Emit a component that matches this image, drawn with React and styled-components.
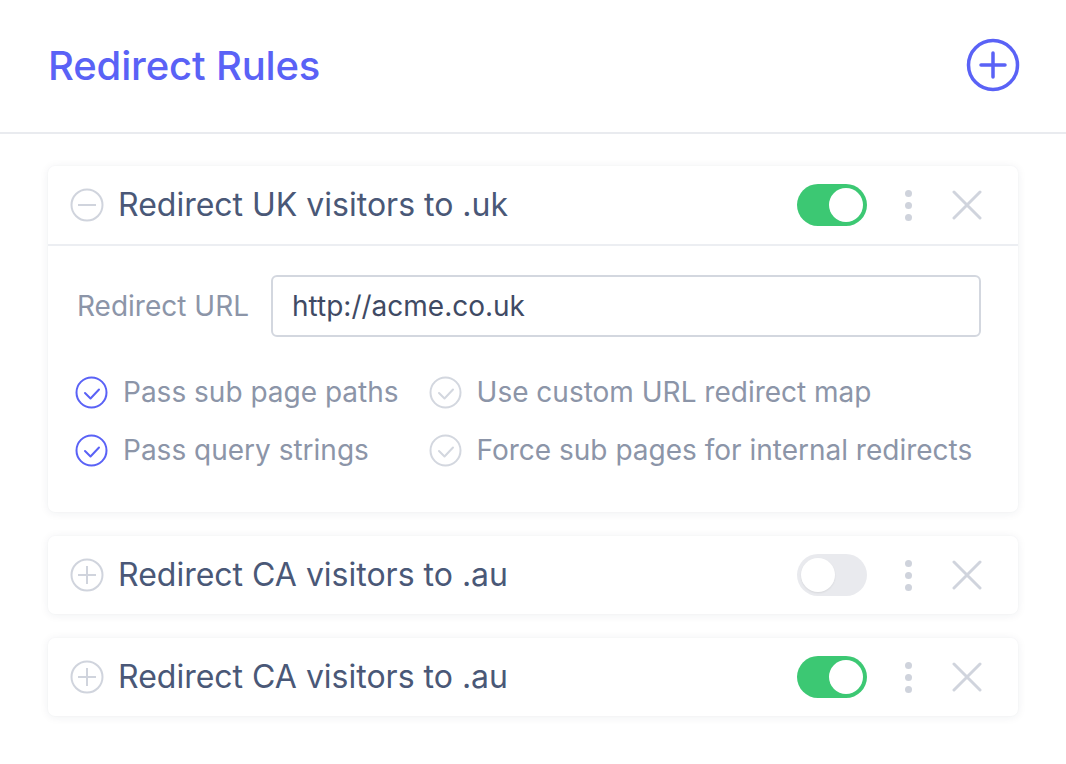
import React from 'react';
import styled, { createGlobalStyle } from 'styled-components';

const GlobalStyle = createGlobalStyle`
  body {
    margin: 0;
    background: #fff;
    font-family: Inter, "Noto Sans", sans-serif;
  }
`;

const Header = styled.header`
  display: flex;
  align-items: center;
  justify-content: space-between;
  height: 134px;
  padding: 0 46px 2px 48px;
  border-bottom: 2px solid #e9ebef;
  box-sizing: border-box;
`;

const Title = styled.h1`
  margin: 0;
  font-size: 40px;
  font-weight: 500;
  color: #5a62f6;
  letter-spacing: -0.15px;
`;

const IconButton = styled.button`
  display: flex;
  padding: 0;
  border: none;
  background: none;
  cursor: pointer;
`;

const List = styled.div`
  display: flex;
  flex-direction: column;
  gap: 24px;
  padding: 32px 48px;
`;

const Card = styled.div`
  background: #fff;
  border-radius: 7px;
  box-shadow: 0 1px 10px rgba(30, 40, 70, 0.07), 0 0 2px rgba(30, 40, 70, 0.04);
`;

const CardHead = styled.div`
  display: flex;
  align-items: center;
  height: 78px;
  padding: 0 36px 0 22px;
  border-bottom: ${({ open }) => (open ? '2px solid #eceef2' : 'none')};
`;

const RuleName = styled.span`
  flex: 1;
  margin-left: 14px;
  padding-bottom: 2px;
  font-size: 32px;
  color: #4a5877;
`;

const Toggle = styled.div`
  position: relative;
  width: 70px;
  height: 42px;
  border-radius: 21px;
  background: ${({ on }) => (on ? '#3cc873' : '#e9eaee')};
  &::after {
    content: '';
    position: absolute;
    top: 4px;
    left: ${({ on }) => (on ? '32px' : '4px')};
    width: 34px;
    height: 34px;
    border-radius: 50%;
    background: #fff;
    box-shadow: ${({ on }) => (on ? 'none' : '0 1px 2px rgba(0,0,0,0.08)')};
  }
`;

const Dots = styled.div`
  display: flex;
  flex-direction: column;
  gap: 5px;
  margin: 0 40px 0 38px;
  span {
    width: 7px;
    height: 7px;
    border-radius: 50%;
    background: #cfd3dc;
  }
`;

const CardBody = styled.div`
  padding: 29px 37px 45px 27px;
`;

const UrlRow = styled.div`
  display: flex;
  align-items: center;
  gap: 22px;
`;

const Label = styled.label`
  padding-left: 2px;
  font-size: 28px;
  color: #8c95a8;
`;

const Input = styled.input`
  flex: 1;
  height: 62px;
  padding: 0 19px;
  box-sizing: border-box;
  border: 2px solid #d3d7df;
  border-radius: 6px;
  font-family: inherit;
  font-size: 28px;
  color: #3f4a64;
  outline: none;
`;

const Options = styled.div`
  display: grid;
  grid-template-columns: auto auto;
  justify-content: start;
  column-gap: 30px;
  row-gap: 24px;
  margin-top: 38px;
`;

const Option = styled.div`
  display: flex;
  align-items: center;
  gap: 15px;
  font-size: 28px;
  color: #8c95a8;
`;

const CircleSign = ({ minus }) => (
  <svg width="34" height="34" viewBox="0 0 34 34" fill="none" stroke="#d0d4dd" strokeWidth="2">
    <circle cx="17" cy="17" r="15.5" />
    <path d="M8 17h18" />
    {!minus && <path d="M17 8v18" />}
  </svg>
);

const CheckIcon = ({ on }) => (
  <svg width="33" height="33" viewBox="0 0 33 33" fill="none" stroke={on ? '#5a62f6' : '#d3d7df'} strokeWidth="2" strokeLinecap="round" strokeLinejoin="round">
    <circle cx="16.5" cy="16.5" r="15" />
    <path d="M10 17l5.5 5.5 8.5-9" />
  </svg>
);

const CloseIcon = () => (
  <svg width="30" height="30" viewBox="0 0 30 30" fill="none" stroke="#d0d4dd" strokeWidth="3" strokeLinecap="round">
    <path d="M2 2l26 26M28 2L2 28" />
  </svg>
);

const PlusIcon = () => (
  <svg width="54" height="54" viewBox="0 0 54 54" fill="none" stroke="#5a62f6" strokeWidth="3.5" strokeLinecap="round">
    <circle cx="27" cy="27" r="24.5" />
    <path d="M15 27h24M27 15v24" />
  </svg>
);

const rules = [
  { name: 'Redirect UK visitors to .uk', on: true, open: true },
  { name: 'Redirect CA visitors to .au', on: false, open: false },
  { name: 'Redirect CA visitors to .au', on: true, open: false },
];

const options = [
  { text: 'Pass sub page paths', on: true },
  { text: 'Use custom URL redirect map', on: false },
  { text: 'Pass query strings', on: true },
  { text: 'Force sub pages for internal redirects', on: false },
];

export default function App() {
  return (
    <>
      <GlobalStyle />
      <Header>
        <Title>Redirect Rules</Title>
        <IconButton>
          <PlusIcon />
        </IconButton>
      </Header>
      <List>
        {rules.map((rule, i) => (
          <Card key={i}>
            <CardHead open={rule.open}>
              <CircleSign minus={rule.open} />
              <RuleName>{rule.name}</RuleName>
              <Toggle on={rule.on} />
              <Dots>
                <span />
                <span />
                <span />
              </Dots>
              <CloseIcon />
            </CardHead>
            {rule.open && (
              <CardBody>
                <UrlRow>
                  <Label>Redirect URL</Label>
                  <Input defaultValue="http://acme.co.uk" />
                </UrlRow>
                <Options>
                  {options.map((o) => (
                    <Option key={o.text}>
                      <CheckIcon on={o.on} />
                      {o.text}
                    </Option>
                  ))}
                </Options>
              </CardBody>
            )}
          </Card>
        ))}
      </List>
    </>
  );
}
